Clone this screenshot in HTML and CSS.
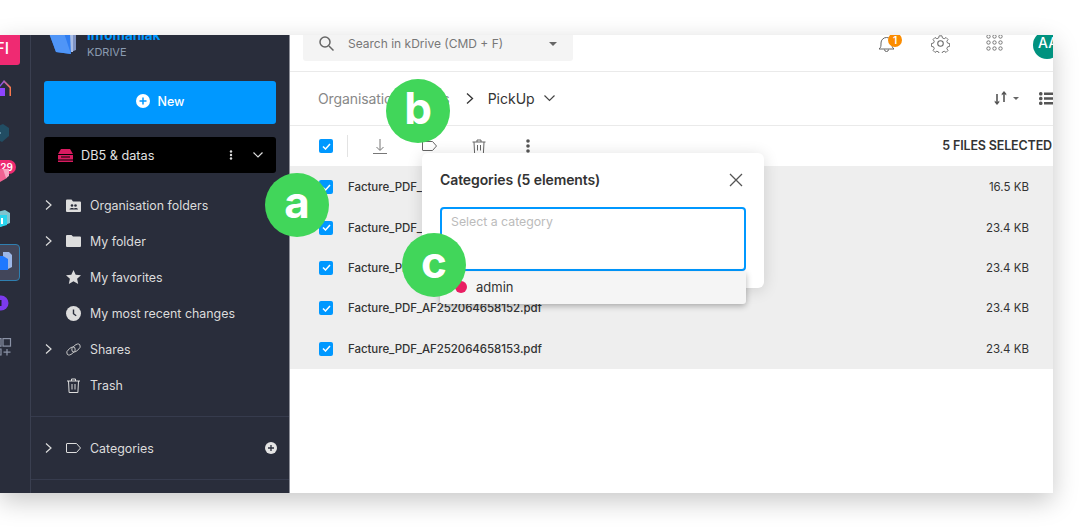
FILE: index.html
```html
<!DOCTYPE html>
<html lang="en">
<head>
<meta charset="utf-8">
<title>kDrive</title>
<link rel="stylesheet" href="styles.css">
</head>
<body>
<div class="window">
  <nav class="rail">
    <div class="app app-mail"><span class="app-mail-text">FI</span></div>
    <svg class="app app-home" width="30" height="24" viewBox="0 0 30 24"><defs><linearGradient id="h" x1="0" x2="1"><stop offset="0" stop-color="#7c4dff"/><stop offset="1" stop-color="#ff7a45"/></linearGradient></defs><path d="M0 6 4 1l7 7v9H9.500V9L4 3.500 0 8z" fill="url(#h)"/><rect x="0" y="9" width="5" height="8" fill="#8e44ff"/></svg>
    <svg class="app app-dark" width="30" height="20" viewBox="0 0 30 20"><path d="M-6 4 3 0l6 4v8l-7 6-8-4z" fill="#214d63"/><path d="M-6 8h7v2h-7z" fill="#5d8ba0"/></svg>
    <div class="app app-swiss">
      <span class="app-count">29</span>
      <svg class="app-swiss-icon" width="30" height="14" viewBox="0 0 30 14"><path d="M-8 0H9l-2 9-7 4-8-3z" fill="#f06292"/><path d="M3 0h6v7l-3 2z" fill="#f8a5c2"/></svg>
    </div>
    <svg class="app app-cyan" width="30" height="18" viewBox="0 0 30 18"><path d="M-6 3 5 0l5 3v10L0 17l-6-2z" fill="#7fc4cf"/><path d="M-6 5H7v10l-7 2-6-2z" fill="#29d4ee"/><rect x="1" y="8" width="2" height="6" fill="#fff"/></svg>
    <div class="app app-active">
      <svg width="20" height="35" viewBox="0 0 20 35"><path d="M3 7h6l3 3v12l-4 2H3z" fill="#9db7e8"/><path d="M-6 11H3l5 3v11H-3z" fill="#1f78ff"/></svg>
    </div>
    <svg class="app app-purple" width="30" height="16" viewBox="0 0 30 16"><circle cx="1" cy="8" r="7.500" fill="#7c3aed"/><rect x="0" y="5" width="1.500" height="6" fill="#1f2130"/></svg>
    <svg class="app app-grid" width="30" height="18" viewBox="0 0 30 18" fill="none" stroke="#8b93a7" stroke-width="1.200"><rect x="3" y=".6" width="7.500" height="7.500"/><path d="M-1 .6h2v7.500h-2M-1 11h2v6h-2M7 11v6.500M3.500 14.200h7"/></svg>
  </nav>

  <aside class="sidebar">
    <header class="brand">
      <svg class="brand-logo" width="32" height="32" viewBox="0 0 32 32"><path d="M14 2h15v24l-5 2z" fill="#7f93c4"/><path d="M8 4h18v24H12z" fill="#a9bde6"/><path d="M2 9l14-4 7 4 1 21-15-2z" fill="#2f7df0"/><path d="M2 9h15l7 21-15-2z" fill="#4f95f7"/></svg>
      <div class="brand-text">
        <span class="brand-name">Infomaniak</span>
        <span class="brand-sub">KDRIVE</span>
      </div>
    </header>

    <div class="side-actions">
      <button class="btn-new" type="button">
        <svg width="14" height="14" viewBox="0 0 14 14"><circle cx="7" cy="7" r="7" fill="#fff"/><path d="M7 3.500v7M3.500 7h7" stroke="#0098ff" stroke-width="1.500"/></svg>
        <span>New</span>
      </button>
      <div class="drive">
        <svg class="drive-icon" width="15" height="13" viewBox="0 0 15 13"><path d="M3 0h9l3 5H0z" fill="#d81b60"/><rect y="6" width="15" height="4.500" fill="#d81b60"/><rect y="11.500" width="15" height="1.500" fill="#d81b60"/><rect x="3" y="7.500" width="9" height="1" fill="#000"/></svg>
        <span class="drive-name">DB5 &amp; datas</span>
        <svg class="drive-more" width="4" height="10" viewBox="0 0 4 10" fill="#ddd"><circle cx="2" cy="1.500" r="1.200"/><circle cx="2" cy="5" r="1.200"/><circle cx="2" cy="8.500" r="1.200"/></svg>
        <svg class="drive-chev" width="10" height="6" viewBox="0 0 10 6" fill="none" stroke="#ddd" stroke-width="1.200"><path d="M.5.500 5 5 9.500.500"/></svg>
      </div>
    </div>

    <ul class="tree">
      <li class="tree-row">
        <svg class="chev" width="7" height="10" viewBox="0 0 7 10"><path d="M1 .5 6 5 1 9.500"/></svg>
        <svg class="tree-icon" width="15" height="13" viewBox="0 0 15 13"><path d="M0 1.500A1 1 0 0 1 1 .5h4.500L7 2.500h7a1 1 0 0 1 1 1V12a1 1 0 0 1-1 1H1a1 1 0 0 1-1-1z" fill="#ddd"/><circle cx="6" cy="6.500" r="1.300" fill="#292d3b"/><circle cx="9.500" cy="6.500" r="1.300" fill="#292d3b"/><path d="M3.500 10.500c0-2 5-2 5 0zM7.500 10.500c0-2 4.500-2 4.500 0z" fill="#292d3b"/></svg>
        <span>Organisation folders</span>
      </li>
      <li class="tree-row">
        <svg class="chev" width="7" height="10" viewBox="0 0 7 10"><path d="M1 .5 6 5 1 9.500"/></svg>
        <svg class="tree-icon" width="15" height="12" viewBox="0 0 15 12"><path d="M0 1a1 1 0 0 1 1-1h4.500L7 1.500h7a1 1 0 0 1 1 1V11a1 1 0 0 1-1 1H1a1 1 0 0 1-1-1z" fill="#ddd"/></svg>
        <span>My folder</span>
      </li>
      <li class="tree-row">
        <span class="chev-gap"></span>
        <svg class="tree-icon" width="15" height="14" viewBox="0 0 15 14"><path d="M7.500 0l2.200 4.700 5.300.6-3.900 3.500 1.100 5.200-4.700-2.700L2.800 14l1.100-5.200L0 5.300l5.300-.6z" fill="#ddd"/></svg>
        <span>My favorites</span>
      </li>
      <li class="tree-row">
        <span class="chev-gap"></span>
        <svg class="tree-icon" width="15" height="15" viewBox="0 0 15 15"><circle cx="7.500" cy="7.500" r="7.500" fill="#ddd"/><path d="M7.500 3.500v4.200l2.700 2" fill="none" stroke="#292d3b" stroke-width="1.400"/></svg>
        <span>My most recent changes</span>
      </li>
      <li class="tree-row">
        <svg class="chev" width="7" height="10" viewBox="0 0 7 10"><path d="M1 .5 6 5 1 9.500"/></svg>
        <svg class="tree-icon" width="15" height="13" viewBox="0 0 15 13" fill="none" stroke="#c9c9c9" stroke-width=".9"><ellipse cx="5" cy="8" rx="5" ry="2.800" transform="rotate(-40 5 8)"/><ellipse cx="10" cy="5" rx="5" ry="2.800" transform="rotate(-40 10 5)"/></svg>
        <span>Shares</span>
      </li>
      <li class="tree-row">
        <span class="chev-gap"></span>
        <svg class="tree-icon" width="15" height="15" viewBox="0 0 15 15" fill="none" stroke="#ddd"><path d="M1 3h13M5.500 3V1h4v2M2.500 3l.6 11.500h8.800L12.500 3M6 6v5.500M9 6v5.500"/></svg>
        <span>Trash</span>
      </li>
    </ul>

    <div class="side-cats">
      <svg class="chev" width="7" height="10" viewBox="0 0 7 10"><path d="M1 .5 6 5 1 9.500"/></svg>
      <svg class="tree-icon" width="15" height="10" viewBox="0 0 15 10" fill="none" stroke="#ddd"><path d="M.5 1a.5.500 0 0 1 .5-.5h9.500L14.500 5l-4 4.500H1a.5.500 0 0 1-.5-.5z"/></svg>
      <span class="side-cats-label">Categories</span>
      <svg width="12" height="12" viewBox="0 0 12 12"><circle cx="6" cy="6" r="6" fill="#e4e4e4"/><path d="M6 3v6M3 6h6" stroke="#292d3b" stroke-width="1.300"/></svg>
    </div>
  </aside>

  <main class="main">
    <div class="topbar">
      <div class="search">
        <svg width="15" height="15" viewBox="0 0 15 15" fill="none" stroke="#666" stroke-width="1.500"><circle cx="6" cy="6" r="5"/><path d="M10 10l4.500 4.500"/></svg>
        <span class="search-text">Search in kDrive (CMD + F)</span>
        <span class="caret"></span>
      </div>
      <div class="top-icons">
        <div class="bell">
          <svg width="17" height="18" viewBox="0 0 17 18" fill="none" stroke="#666"><path d="M1 14c2-1.500 2-3 2-6a5.500 5.500 0 0 1 11 0c0 3 0 4.500 2 6zM6.500 14.500a2 2 0 0 0 4 0"/></svg>
          <span class="bell-badge">1</span>
        </div>
        <svg class="gear" width="19" height="19" viewBox="0 0 24 24" fill="none" stroke="#666" stroke-width="1.300"><circle cx="12" cy="12" r="3.500"/><path d="M10 1.500h4l.7 3 2.600 1.100 2.600-1.700 2.800 2.800-1.700 2.600 1.100 2.600 3 .7v4l-3 .7-1.100 2.600 1.700 2.600-2.800 2.800-2.600-1.700-2.600 1.100-.7 3h-4l-.7-3-2.600-1.100-2.600 1.700-2.800-2.800 1.700-2.600-1.100-2.600-3-.7v-4l3-.7 1.100-2.600-1.700-2.600 2.800-2.800 2.600 1.700 2.600-1.100z" transform="translate(1.500 1) scale(.88)"/></svg>
        <svg class="dots" width="17" height="17" viewBox="0 0 17 17" fill="none" stroke="#777"><circle cx="2.500" cy="2.500" r="1.700"/><circle cx="8.500" cy="2.500" r="1.700"/><circle cx="14.500" cy="2.500" r="1.700"/><circle cx="2.500" cy="8.500" r="1.700"/><circle cx="8.500" cy="8.500" r="1.700"/><circle cx="14.500" cy="8.500" r="1.700"/><circle cx="2.500" cy="14.500" r="1.700"/><circle cx="8.500" cy="14.500" r="1.700"/><circle cx="14.500" cy="14.500" r="1.700"/></svg>
        <div class="avatar">AA</div>
      </div>
    </div>

    <div class="crumbs">
      <span class="crumb-root">Organisation folders</span>
      <svg class="crumb-sep" width="8" height="11" viewBox="0 0 8 11" fill="none" stroke="#333" stroke-width="1.300"><path d="M1 .5 6.500 5.500 1 10.500"/></svg>
      <span class="crumb-current">PickUp</span>
      <svg class="crumb-chev" width="11" height="7" viewBox="0 0 11 7" fill="none" stroke="#444" stroke-width="1.200"><path d="M.5.500 5.500 5.500 10.500.500"/></svg>
      <div class="view-tools">
        <svg width="13" height="14" viewBox="0 0 13 14" fill="#555"><path d="M2.200 3h1.600v8l1.500-1.500v1.700L3 14 .7 11.200V9.500L2.200 11zM9.200 11h1.600V3l1.500 1.500V2.800L10 0 7.700 2.800v1.700L9.200 3z"/></svg>
        <span class="caret caret-small"></span>
        <svg class="list-icon" width="14" height="13" viewBox="0 0 14 13" fill="#555"><rect width="3.500" height="3.500" rx="1.500"/><rect x="5" y=".5" width="9" height="2.500"/><rect y="4.750" width="3.500" height="3.500" rx="1.500"/><rect x="5" y="5.250" width="9" height="2.500"/><rect y="9.500" width="3.500" height="3.500" rx="1.500"/><rect x="5" y="10" width="9" height="2.500"/></svg>
      </div>
    </div>

    <div class="toolbar">
      <span class="check"><svg width="9" height="7" viewBox="0 0 9 7" fill="none" stroke="#fff" stroke-width="1.500"><path d="M1 3.500 3.500 6 8 1"/></svg></span>
      <span class="tool-sep"></span>
      <svg class="tool tool-dl" width="14" height="15" viewBox="0 0 14 15" fill="none" stroke="#777"><path d="M7 0v11M3.500 8 7 11.500 10.500 8M0 14.500h14"/></svg>
      <svg class="tool tool-tag" width="15" height="10" viewBox="0 0 15 10" fill="none" stroke="#666"><path d="M.5 1a.5.500 0 0 1 .5-.5h9.500L14.500 5l-4 4.500H1a.5.500 0 0 1-.5-.5z"/></svg>
      <svg class="tool tool-trash" width="14" height="15" viewBox="0 0 14 15" fill="none" stroke="#666"><path d="M.5 3h13M5 3V1h4v2M2 3l.6 11.500h8.800L12 3M5.500 6v5.500M8.500 6v5.500"/></svg>
      <svg class="tool tool-more" width="4" height="14" viewBox="0 0 4 14" fill="#555"><circle cx="2" cy="2" r="1.800"/><circle cx="2" cy="7" r="1.800"/><circle cx="2" cy="12" r="1.800"/></svg>
      <span class="selected-count">5 FILES SELECTED</span>
    </div>

    <div class="files">
      <div class="file"><span class="check"><svg width="9" height="7" viewBox="0 0 9 7" fill="none" stroke="#fff" stroke-width="1.500"><path d="M1 3.500 3.500 6 8 1"/></svg></span><span class="file-name">Facture_PDF_AF252064658149.pdf</span><span class="file-size">16.5 KB</span></div>
      <div class="file"><span class="check"><svg width="9" height="7" viewBox="0 0 9 7" fill="none" stroke="#fff" stroke-width="1.500"><path d="M1 3.500 3.500 6 8 1"/></svg></span><span class="file-name">Facture_PDF_AF252064658150.pdf</span><span class="file-size">23.4 KB</span></div>
      <div class="file"><span class="check"><svg width="9" height="7" viewBox="0 0 9 7" fill="none" stroke="#fff" stroke-width="1.500"><path d="M1 3.500 3.500 6 8 1"/></svg></span><span class="file-name">Facture_PDF_AF252064658151.pdf</span><span class="file-size">23.4 KB</span></div>
      <div class="file"><span class="check"><svg width="9" height="7" viewBox="0 0 9 7" fill="none" stroke="#fff" stroke-width="1.500"><path d="M1 3.500 3.500 6 8 1"/></svg></span><span class="file-name">Facture_PDF_AF252064658152.pdf</span><span class="file-size">23.4 KB</span></div>
      <div class="file"><span class="check"><svg width="9" height="7" viewBox="0 0 9 7" fill="none" stroke="#fff" stroke-width="1.500"><path d="M1 3.500 3.500 6 8 1"/></svg></span><span class="file-name">Facture_PDF_AF252064658153.pdf</span><span class="file-size">23.4 KB</span></div>
    </div>
  </main>

  <section class="modal">
    <div class="modal-head">
      <h2 class="modal-title">Categories (5 elements)</h2>
      <svg width="14" height="14" viewBox="0 0 14 14" fill="none" stroke="#555" stroke-width="1.300"><path d="M1 1l12 12M13 1 1 13"/></svg>
    </div>
    <div class="modal-input">Select a category</div>
    <div class="modal-option"><span class="option-dot"></span><span>admin</span></div>
  </section>

  <span class="marker marker-a">a</span>
  <span class="marker marker-b">b</span>
  <span class="marker marker-c">c</span>
</div>
</body>
</html>
```

FILE: styles.css
```css
* { box-sizing: border-box; }
html, body { margin: 0; height: 100%; overflow: hidden; background: #fff; }
body { padding-top: 35px; font-family: Inter, "Liberation Sans", sans-serif; }
ul { list-style: none; margin: 0; padding: 0; }
svg { display: block; flex: none; }

.window {
  position: relative;
  display: flex;
  width: 1053px;
  height: 458px;
  background: #fff;
  box-shadow: 0 8px 24px rgba(0, 0, 0, .22);
}

/* app rail */
.rail {
  width: 31px;
  flex: none;
  overflow: hidden;
  background: #292d3b;
  border-right: 1px solid #3a3f50;
}
.app { position: relative; display: block; }
.app-mail {
  width: 40px;
  height: 30px;
  margin-left: -20px;
  background: #ef2a72;
  border-radius: 0 0 3px 3px;
}
.app-mail-text {
  position: absolute;
  right: 11px;
  top: 3px;
  color: #fff;
  font-size: 16px;
  font-weight: 500;
}
.app-home { margin-top: 14px; }
.app-dark { margin-top: 21px; }
.app-swiss { height: 23px; margin-top: 16px; }
.app-count {
  position: absolute;
  left: -8px;
  top: 0;
  width: 24px;
  height: 14px;
  background: #ef2a72;
  border-radius: 7px;
  color: #fff;
  font-size: 10px;
  font-weight: 600;
  line-height: 14px;
  text-align: right;
  padding-right: 3px;
}
.app-swiss-icon { position: absolute; left: 0; top: 9px; }
.app-cyan { margin-top: 27px; }
.app-active {
  width: 30px;
  height: 37px;
  margin: 16px 0 0 -10px;
  padding-left: 9px;
  background: #42465a;
  border: 1px solid #2f7fb0;
  border-radius: 4px;
  overflow: hidden;
}
.app-purple { margin-top: 14px; }
.app-grid { margin-top: 27px; }

/* sidebar */
.sidebar {
  width: 259px;
  flex: none;
  display: flex;
  flex-direction: column;
  background: #292d3b;
  color: #dcdcdc;
  overflow: hidden;
  border-right: 1px solid #8d8f99;
}
.brand {
  height: 46px;
  flex: none;
  display: flex;
  align-items: flex-end;
  gap: 8px;
  padding: 0 0 0 16px;
  overflow: hidden;
}
.brand-logo { margin-bottom: 25px; }
.brand-text { display: flex; flex-direction: column; margin-bottom: 21px; }
.brand-name { color: #0098ff; font-size: 13.500px; font-weight: 700; line-height: 18px; }
.brand-sub { color: #8a9bb0; font-size: 11px; line-height: 16px; }

.side-actions {
  display: flex;
  flex-direction: column;
  gap: 13px;
  padding: 0 13px;
}
.btn-new {
  height: 43px;
  display: flex;
  align-items: center;
  justify-content: center;
  gap: 8px;
  padding: 0 0 3px;
  background: #0098ff;
  border: 0;
  border-radius: 3px;
  color: #fff;
  font: 500 12.500px Inter, "Liberation Sans", sans-serif;
}
.drive {
  height: 36px;
  display: flex;
  align-items: center;
  padding: 0 13px 0 14px;
  background: #000;
  border-radius: 3px;
  font-size: 12.700px;
  color: #e2e2e2;
}
.drive-name { margin-left: 8px; flex: 1; }
.drive-chev { margin-left: 20px; }

.tree { margin-top: 14px; padding-left: 14px; }
.tree-row {
  height: 36px;
  display: flex;
  align-items: center;
  font-size: 12.400px;
}
.chev { fill: none; stroke: #dcdcdc; stroke-width: 1.200; margin-right: 14px; }
.chev-gap { width: 21px; flex: none; }
.tree-icon { margin-right: 9px; width: 15px; }

.side-cats {
  height: 64px;
  margin-top: 13px;
  display: flex;
  align-items: center;
  padding: 0 12px 0 14px;
  border-top: 1px solid #363b4d;
  border-bottom: 1px solid #363b4d;
  font-size: 12.400px;
}
.side-cats-label { flex: 1; }

/* main */
.main { flex: 1; min-width: 0; display: flex; flex-direction: column; color: #333; }
.topbar {
  height: 37px;
  flex: none;
  display: flex;
  justify-content: space-between;
  padding-left: 13px;
  border-bottom: 1px solid #eaeaea;
}
.search {
  width: 270px;
  height: 26px;
  display: flex;
  align-items: center;
  gap: 14px;
  padding: 0 16px 9px;
  background: #f4f4f4;
  border-radius: 0 0 3px 3px;
  color: #777;
  font-size: 12px;
}
.search-text { flex: 1; }
.caret {
  width: 0;
  height: 0;
  border: 4px solid transparent;
  border-top: 4px solid #666;
  border-bottom: 0;
}
.caret-small { border-width: 3px 3.500px 0; margin-left: 6px; }
.top-icons { display: flex; align-items: flex-start; overflow: hidden; width: 175px; }
.bell { position: relative; height: 18px; margin-top: 0; }
.bell-badge {
  position: absolute;
  left: 10px;
  top: -2px;
  width: 14px;
  height: 14px;
  background: #fb8c00;
  border-radius: 50%;
  color: #fff;
  font-size: 10px;
  font-weight: 600;
  line-height: 14px;
  text-align: center;
}
.gear { margin: -1px 0 0 36px; }
.dots { margin: -1px 0 0 36px; }
.avatar {
  width: 28px;
  height: 28px;
  flex: none;
  margin: -4px 0 0 30px;
  background: #00927f;
  border-radius: 50%;
  color: #fff;
  font-size: 14px;
  font-weight: 500;
  line-height: 24px;
  padding-left: 5px;
}

.crumbs {
  height: 54px;
  flex: none;
  display: flex;
  align-items: center;
  padding: 0 0 1px 28px;
  border-bottom: 1px solid #eaeaea;
  font-size: 14px;
}
.crumb-root { color: #888; letter-spacing: -.1px; }
.crumb-sep { margin: 0 14px 0 16px; }
.crumb-current { color: #333; }
.crumb-chev { margin-left: 9px; }
.view-tools { margin-left: auto; display: flex; align-items: center; }
.list-icon { margin-left: 20px; }

.toolbar {
  height: 40px;
  flex: none;
  display: flex;
  align-items: center;
  padding: 0 1px 0 29px;
  font-size: 12.500px;
}
.check {
  width: 14px;
  height: 14px;
  flex: none;
  display: flex;
  align-items: center;
  justify-content: center;
  background: #0098ff;
  border-radius: 2px;
}
.tool-sep { width: 1px; height: 22px; margin-left: 14px; background: #e3e3e3; }
.tool-dl { margin-left: 25px; }
.tool-tag { margin-left: 35px; }
.tool-trash { margin-left: 35px; }
.tool-more { margin-left: 40px; }
.selected-count { margin: 0 0 2px auto; font-weight: 600; color: #333; letter-spacing: -.15px; }

.files { display: grid; grid-auto-rows: 40.400px; padding-top: 1px; background: #eee; }
.file {
  display: flex;
  align-items: center;
  padding: 0 24px 0 29px;
  font-size: 11.500px;
  font-weight: 500;
  color: #333;
}
.file-name { margin-left: 15px; flex: 1; letter-spacing: -.06px; }
.file-size { font-weight: 400; }

/* modal and markers, floating over the page */
.modal {
  position: absolute;
  left: 422px;
  top: 118px;
  width: 342px;
  height: 135px;
  padding: 0 18px;
  background: #fff;
  border-radius: 6px;
  box-shadow: 0 2px 16px rgba(0, 0, 0, .14);
}
.modal-head {
  height: 54px;
  display: flex;
  align-items: center;
  justify-content: space-between;
  padding: 0 3px 1px 0;
}
.modal-title { margin: 0; font-size: 14px; font-weight: 600; color: #333; letter-spacing: -.1px; }
.modal-input {
  height: 64px;
  padding: 5px 9px;
  border: 2px solid #0098ff;
  border-radius: 4px;
  color: #bbb;
  font-size: 12.300px;
}
.modal-option {
  height: 32px;
  margin-top: 1px;
  display: flex;
  align-items: center;
  gap: 9px;
  padding: 0 0 2px 15px;
  background: #f5f5f5;
  border-radius: 0 0 3px 3px;
  box-shadow: 0 2px 6px rgba(0, 0, 0, .3);
  color: #333;
  font-size: 13px;
}
.option-dot { width: 12px; height: 12px; border-radius: 50%; background: #e91e63; }

.marker {
  position: absolute;
  width: 64px;
  height: 64px;
  border-radius: 50%;
  background: #41d65a;
  color: #fff;
  font-size: 44px;
  font-weight: 700;
  line-height: 58px;
  text-align: center;
}
.marker-a { left: 265px; top: 138px; }
.marker-b { left: 386px; top: 44px; }
.marker-c { left: 402px; top: 198px; }
```
